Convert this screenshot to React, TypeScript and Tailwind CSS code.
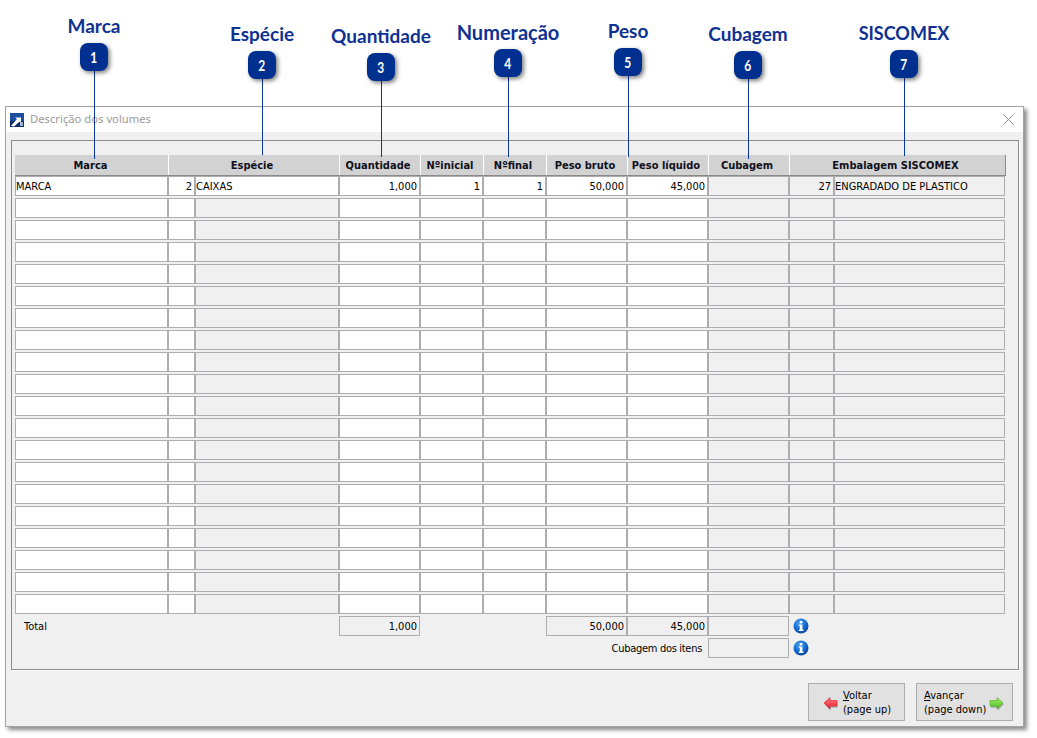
const COLS = 'grid grid-cols-[153px_27px_144px_81px_63px_63px_81px_81px_81px_45px_171px]'

const callouts = [
    { n: 1, label: 'Marca', labelCls: 'left-[94px] top-[12px] text-[19px]', badgeCls: 'left-[80px] top-[43px]', lineCls: 'left-[94px] top-[71px] h-[88px]' },
    { n: 2, label: 'Espécie', labelCls: 'left-[262px] top-[20px] text-[19px]', badgeCls: 'left-[248px] top-[51px]', lineCls: 'left-[262px] top-[79px] h-[76px]' },
    { n: 3, label: 'Quantidade', labelCls: 'left-[381px] top-[22px] text-[19px]', badgeCls: 'left-[367px] top-[53px]', lineCls: 'left-[381px] top-[81px] h-[76px]' },
    { n: 4, label: 'Numeração', labelCls: 'left-[508px] top-[18px] text-[20px]', badgeCls: 'left-[494px] top-[49px]', lineCls: 'left-[508px] top-[77px] h-[80px]' },
    { n: 5, label: 'Peso', labelCls: 'left-[628px] top-[17px] text-[19px]', badgeCls: 'left-[614px] top-[48px]', lineCls: 'left-[628px] top-[76px] h-[81px]' },
    { n: 6, label: 'Cubagem', labelCls: 'left-[748px] top-[20px] text-[19px]', badgeCls: 'left-[734px] top-[51px]', lineCls: 'left-[748px] top-[79px] h-[80px]' },
    { n: 7, label: 'SISCOMEX', labelCls: 'left-[904px] top-[19px] text-[18px]', badgeCls: 'left-[890px] top-[50px]', lineCls: 'left-[904px] top-[78px] h-[78px]' },
]

const headers = [
    { text: 'Marca', cls: 'pr-[2px]' },
    { text: 'Espécie', cls: 'col-span-2 border-l border-white pr-[4px]' },
    { text: 'Quantidade', cls: 'border-l border-white pr-[4px]' },
    { text: 'Nºinicial', cls: 'border-l border-white pr-[4px]' },
    { text: 'Nºfinal', cls: 'border-l border-white pr-[4px]' },
    { text: 'Peso bruto', cls: 'border-l border-white pr-[4px]' },
    { text: 'Peso líquido', cls: 'border-l border-white pr-[4px]' },
    { text: 'Cubagem', cls: 'border-l border-white pr-[4px]' },
    { text: 'Embalagem SISCOMEX', cls: 'col-span-2 border-l border-white pr-[4px]' },
]

const disabledCols = [2, 8, 9, 10]

const firstRow: { text: string; right?: boolean; gray?: boolean }[] = [
    { text: 'MARCA' },
    { text: '2', right: true },
    { text: 'CAIXAS' },
    { text: '1,000', right: true },
    { text: '1', right: true },
    { text: '1', right: true },
    { text: '50,000', right: true },
    { text: '45,000', right: true },
    { text: '', gray: true },
    { text: '27', right: true, gray: true },
    { text: 'ENGRADADO DE PLASTICO', gray: true },
]

const Cell = ({ text, right, gray }: { text?: string; right?: boolean; gray?: boolean }) => (
    <div
        className={`h-5 border border-[#adadb0] flex items-center leading-none whitespace-nowrap ${
            right ? 'justify-end pr-[2px]' : 'pl-0'
        } ${gray ? 'bg-[#f0f0f0]' : 'bg-white'}`}
    >
        {text}
    </div>
)

const InfoIcon = () => (
    <svg width="16" height="16" viewBox="0 0 16 16" className="ml-[4px]">
        <defs>
            <radialGradient id="infoFill" cx="40%" cy="30%" r="75%">
                <stop offset="0%" stopColor="#4aa3f0" />
                <stop offset="60%" stopColor="#1268cf" />
                <stop offset="100%" stopColor="#0a3f96" />
            </radialGradient>
        </defs>
        <circle cx="8" cy="8" r="7.5" fill="url(#infoFill)" />
        <rect x="6.8" y="3" width="2.6" height="2.4" fill="#fff" />
        <path d="M5.8 6.4h3.6v5.2h1.1v1.3H5.8v-1.3h1v-3.9h-1z" fill="#fff" />
    </svg>
)

const ArrowIcon = ({ dir }: { dir: 'left' | 'right' }) => (
    <svg width="15" height="14" viewBox="0 0 15 14">
        <defs>
            <linearGradient id="redFill" x1="0" y1="0" x2="0" y2="1">
                <stop offset="0%" stopColor="#ff7a80" />
                <stop offset="100%" stopColor="#e8202c" />
            </linearGradient>
            <linearGradient id="greenFill" x1="0" y1="0" x2="0" y2="1">
                <stop offset="0%" stopColor="#a4ec6a" />
                <stop offset="100%" stopColor="#4fc022" />
            </linearGradient>
        </defs>
        {dir === 'left' ? (
            <>
                <path d="M1 7.5 7 2v3h7v6H7v3z" fill="#a8a8a8" transform="translate(0.6 0.8)" />
                <path d="M1 7 7 1.500v3h7v5.500H7v3z" fill="url(#redFill)" stroke="#d8202c" strokeWidth="0.6" />
            </>
        ) : (
            <>
                <path d="M14 7.5 8 2v3H1v6h7v3z" fill="#a8a8a8" transform="translate(0.6 0.8)" />
                <path d="M14 7 8 1.500v3H1v5.500h7v3z" fill="url(#greenFill)" stroke="#46a81f" strokeWidth="0.6" />
            </>
        )}
    </svg>
)

const App = () => {
    return (
        <div className="relative w-[1037px] h-[738px] bg-white pt-[106px] pl-[5px] overflow-hidden font-['DejaVu_Sans',sans-serif] font-stretch-condensed text-[11px] text-black">
            <div className="w-[1019px] h-[621px] border border-[#a3a3a3] bg-[#f0f0f0] shadow-[3px_3px_4px_rgba(0,0,0,0.45)] flex flex-col">
                {/* titlebar */}
                <div className="h-[25px] bg-white flex items-center pl-[4px] pr-[9px] shrink-0">
                    <svg width="14" height="14" viewBox="0 0 14 14">
                        <rect width="14" height="14" fill="#1c4f9c" />
                        <rect y="8" width="14" height="6" fill="#0f2f6b" />
                        <path d="M1 13 7 6 5 4.500h6v6L9.300 8.800 4 13.500z" fill="#fff" />
                        <rect x="10" y="9" width="3" height="4" fill="#9fb4d2" />
                    </svg>
                    <span className="ml-[6px] pb-[1px] text-[11.25px] text-[#9b9b9b] font-['Noto_Sans',sans-serif] font-stretch-normal">
                        Descrição dos volumes
                    </span>
                    <svg width="11" height="11" viewBox="0 0 11 11" className="ml-auto" stroke="#8e8e8e" strokeWidth="1">
                        <path d="M0.500 0.500 10.500 10.500M10.500 0.500 0.500 10.500" />
                    </svg>
                </div>

                <div className="pl-[5px] pt-[8px]">
                    {/* group box */}
                    <div className="w-[1008px] h-[530px] border border-[#8a8a8a] shadow-[1px_1px_0_#fff] pl-[3px] pt-[14px]">
                        <div className={`${COLS} w-[991px] h-[21px] bg-[#d2d2d2] border-b border-[#8a8a8a] border-r border-r-[#8a8a8a]`}>
                            {headers.map((h) => (
                                <div key={h.text} className={`${h.cls} flex items-center justify-center pt-[2px] font-bold text-[#10101a]`}>
                                    {h.text}
                                </div>
                            ))}
                        </div>

                        <div className="flex flex-col gap-[2px]">
                            <div className={COLS}>
                                {firstRow.map((c, i) => (
                                    <Cell key={i} text={c.text} right={c.right} gray={c.gray} />
                                ))}
                            </div>
                            {Array.from({ length: 19 }).map((_, r) => (
                                <div key={r} className={COLS}>
                                    {Array.from({ length: 11 }).map((_, i) => (
                                        <Cell key={i} gray={disabledCols.includes(i)} />
                                    ))}
                                </div>
                            ))}
                        </div>

                        {/* totals */}
                        <div className={`${COLS} mt-[2px]`}>
                            <div className="col-span-3 flex items-center pl-[9px] pt-[3px]">Total</div>
                            <Cell text="1,000" right gray />
                            <div className="col-span-2" />
                            <Cell text="50,000" right gray />
                            <Cell text="45,000" right gray />
                            <Cell gray />
                            <div className="col-span-2 flex items-center">
                                <InfoIcon />
                            </div>
                        </div>
                        <div className={`${COLS} mt-[2px]`}>
                            <div className="col-span-8 flex items-center justify-end pr-[6px] pt-[2px] tracking-[-0.3px]">Cubagem dos itens</div>
                            <Cell gray />
                            <div className="col-span-2 flex items-center">
                                <InfoIcon />
                            </div>
                        </div>
                    </div>

                    {/* footer buttons */}
                    <div className="flex justify-end gap-[11px] w-[1008px] pr-[6px] pt-[13px]">
                        <button className="w-[97px] h-[38px] bg-[#e1e1e1] border border-[#adadad] flex items-center pl-[14px] pt-[1px] gap-[5px] text-left leading-[14px]">
                            <ArrowIcon dir="left" />
                            <span>
                                <u>V</u>oltar
                                <br />
                                (page up)
                            </span>
                        </button>
                        <button className="w-[97px] h-[38px] bg-[#e1e1e1] border border-[#adadad] flex items-center pl-[7px] pt-[1px] gap-[3px] text-left leading-[14px]">
                            <span>
                                <u>A</u>vançar
                                <br />
                                (page down)
                            </span>
                            <ArrowIcon dir="right" />
                        </button>
                    </div>
                </div>
            </div>

            {/* callouts over the window */}
            {callouts.map((c) => (
                <div key={c.n}>
                    <div className={`absolute w-px bg-[#0b35a0] ${c.lineCls}`} />
                    <div className={`absolute -translate-x-1/2 font-['Lato',sans-serif] font-stretch-normal font-bold leading-[28px] text-[#0e3192] whitespace-nowrap ${c.labelCls}`}>
                        {c.label}
                    </div>
                    <div className={`absolute w-[28px] h-[28px] rounded-[8px] bg-[#00308f] shadow-[2px_2px_4px_rgba(0,0,0,0.5)] flex items-center justify-center text-white font-['Lato',sans-serif] font-stretch-normal font-bold text-[16px] ${c.badgeCls}`}>
                        <span className="inline-block scale-x-75">{c.n}</span>
                    </div>
                </div>
            ))}
        </div>
    )
}

export default App
